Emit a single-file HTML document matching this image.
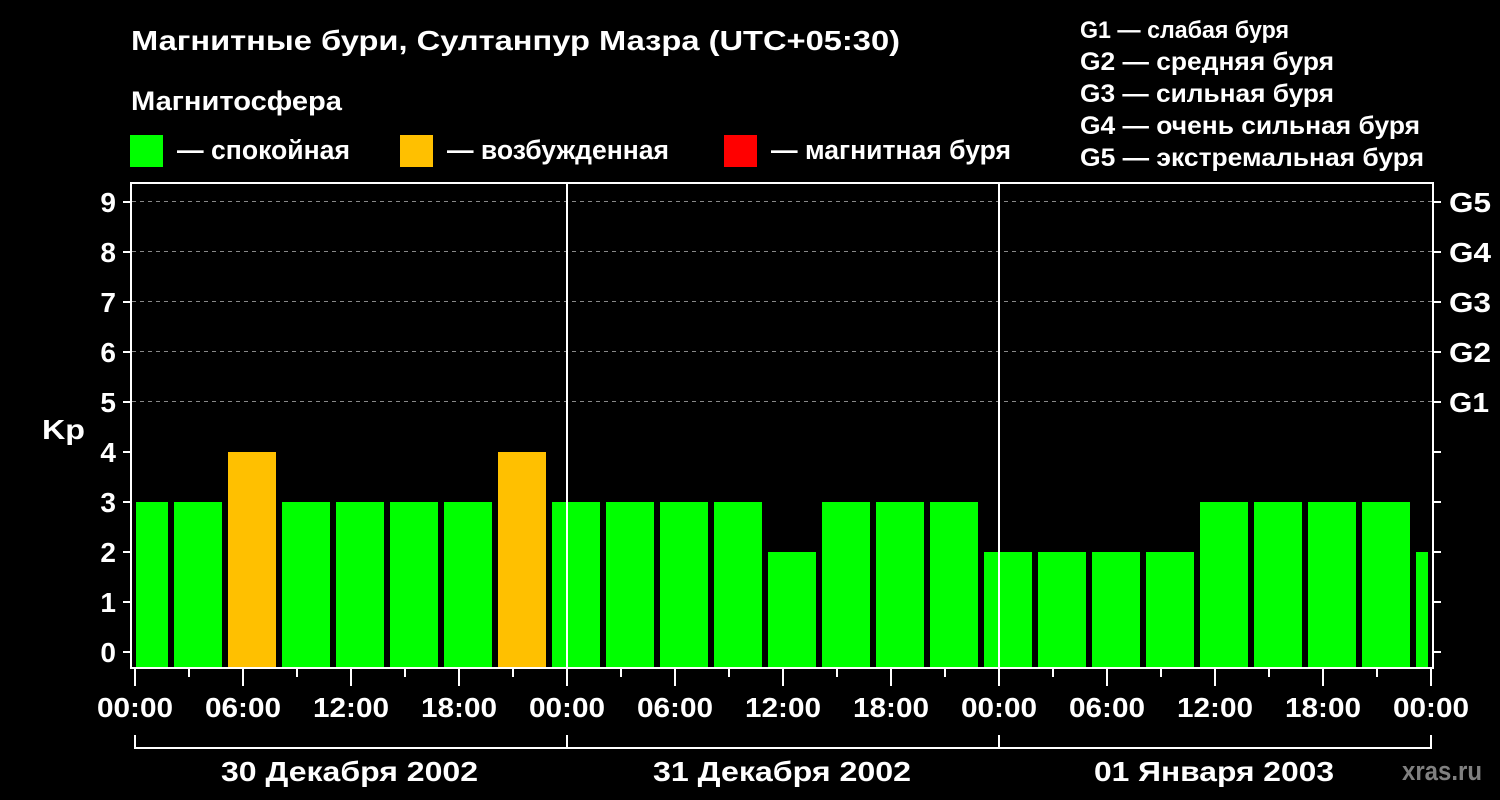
<!DOCTYPE html>
<html><head><meta charset="utf-8"><style>
html,body{margin:0;padding:0;background:#000;}
svg{display:block}
text{font-family:"Liberation Sans",sans-serif;font-weight:bold;fill:#fff}
</style></head><body>
<svg width="1500" height="800" xmlns="http://www.w3.org/2000/svg">
<rect width="1500" height="800" fill="#000"/>
<text x="131" y="50" font-size="28" textLength="769" lengthAdjust="spacingAndGlyphs">Магнитные бури, Султанпур Мазра (UTC+05:30)</text>
<text x="131" y="110" font-size="27" textLength="211" lengthAdjust="spacingAndGlyphs">Магнитосфера</text>
<rect x="130" y="135" width="33" height="32" fill="#00ff00"/>
<text x="177" y="159" font-size="27" textLength="173" lengthAdjust="spacingAndGlyphs">— спокойная</text>
<rect x="400" y="135" width="33" height="32" fill="#ffc000"/>
<text x="447" y="159" font-size="27" textLength="222" lengthAdjust="spacingAndGlyphs">— возбужденная</text>
<rect x="724" y="135" width="33" height="32" fill="#ff0000"/>
<text x="771" y="159" font-size="27" textLength="240" lengthAdjust="spacingAndGlyphs">— магнитная буря</text>
<g font-size="25">
<text x="1080" y="38" font-size="24" textLength="209" lengthAdjust="spacingAndGlyphs">G1 — слабая буря</text>
<text x="1080" y="70" textLength="254" lengthAdjust="spacingAndGlyphs">G2 — средняя буря</text>
<text x="1080" y="102" textLength="254" lengthAdjust="spacingAndGlyphs">G3 — сильная буря</text>
<text x="1080" y="134" textLength="340" lengthAdjust="spacingAndGlyphs">G4 — очень сильная буря</text>
<text x="1080" y="166" textLength="344" lengthAdjust="spacingAndGlyphs">G5 — экстремальная буря</text>
</g>
<g stroke="#888" stroke-width="1" stroke-dasharray="4,4">
<line x1="132" y1="201.5" x2="1432" y2="201.5"/>
<line x1="132" y1="251.5" x2="1432" y2="251.5"/>
<line x1="132" y1="301.5" x2="1432" y2="301.5"/>
<line x1="132" y1="351.5" x2="1432" y2="351.5"/>
<line x1="132" y1="401.5" x2="1432" y2="401.5"/>
</g>
<g fill="#00ff00">
<rect x="136" y="502" width="32" height="166"/>
<rect x="174" y="502" width="48" height="166"/>
<rect x="228" y="452" width="48" height="216" fill="#ffc000"/>
<rect x="282" y="502" width="48" height="166"/>
<rect x="336" y="502" width="48" height="166"/>
<rect x="390" y="502" width="48" height="166"/>
<rect x="444" y="502" width="48" height="166"/>
<rect x="498" y="452" width="48" height="216" fill="#ffc000"/>
<rect x="552" y="502" width="48" height="166"/>
<rect x="606" y="502" width="48" height="166"/>
<rect x="660" y="502" width="48" height="166"/>
<rect x="714" y="502" width="48" height="166"/>
<rect x="768" y="552" width="48" height="116"/>
<rect x="822" y="502" width="48" height="166"/>
<rect x="876" y="502" width="48" height="166"/>
<rect x="930" y="502" width="48" height="166"/>
<rect x="984" y="552" width="48" height="116"/>
<rect x="1038" y="552" width="48" height="116"/>
<rect x="1092" y="552" width="48" height="116"/>
<rect x="1146" y="552" width="48" height="116"/>
<rect x="1200" y="502" width="48" height="166"/>
<rect x="1254" y="502" width="48" height="166"/>
<rect x="1308" y="502" width="48" height="166"/>
<rect x="1362" y="502" width="48" height="166"/>
<rect x="1416" y="552" width="12" height="116"/>
</g>
<g stroke="#fff" stroke-width="2" fill="none">
<rect x="131" y="183" width="1302" height="485"/>
<line x1="567" y1="183" x2="567" y2="668"/>
<line x1="999" y1="183" x2="999" y2="668"/>
<path d="M135 735V748H1431V735M567 735V748M999 735V748"/>
<path d="M123 652h8M123 602h8M123 552h8M123 502h8M123 452h8M123 402h8M123 352h8M123 302h8M123 252h8M123 202h8"/>
<path d="M1433 652h8M1433 602h8M1433 552h8M1433 502h8M1433 452h8M1433 402h8M1433 352h8M1433 302h8M1433 252h8M1433 202h8"/>
<path d="M135 668v18M189 668v9M243 668v18M297 668v9M351 668v18M405 668v9M459 668v18M513 668v9M567 668v18M621 668v9M675 668v18M729 668v9M783 668v18M837 668v9M891 668v18M945 668v9M999 668v18M1053 668v9M1107 668v18M1161 668v9M1215 668v18M1269 668v9M1323 668v18M1377 668v9M1431 668v18"/>
</g>
<g font-size="28" text-anchor="end">
<text x="116" y="662">0</text><text x="116" y="612">1</text><text x="116" y="562">2</text>
<text x="116" y="512">3</text><text x="116" y="462">4</text><text x="116" y="412">5</text>
<text x="116" y="362">6</text><text x="116" y="312">7</text><text x="116" y="262">8</text>
<text x="116" y="212">9</text>
</g>
<text x="42" y="439" font-size="28" textLength="43" lengthAdjust="spacingAndGlyphs">Kp</text>
<g font-size="28">
<text x="1449" y="412" textLength="40" lengthAdjust="spacingAndGlyphs">G1</text><text x="1449" y="362" textLength="42" lengthAdjust="spacingAndGlyphs">G2</text><text x="1449" y="312" textLength="42" lengthAdjust="spacingAndGlyphs">G3</text>
<text x="1449" y="262" textLength="42" lengthAdjust="spacingAndGlyphs">G4</text><text x="1449" y="212" textLength="42" lengthAdjust="spacingAndGlyphs">G5</text>
</g>
<g font-size="28">
<text x="97" y="717" textLength="76" lengthAdjust="spacingAndGlyphs">00:00</text><text x="205" y="717" textLength="76" lengthAdjust="spacingAndGlyphs">06:00</text><text x="313" y="717" textLength="76" lengthAdjust="spacingAndGlyphs">12:00</text><text x="421" y="717" textLength="76" lengthAdjust="spacingAndGlyphs">18:00</text>
<text x="529" y="717" textLength="76" lengthAdjust="spacingAndGlyphs">00:00</text><text x="637" y="717" textLength="76" lengthAdjust="spacingAndGlyphs">06:00</text><text x="745" y="717" textLength="76" lengthAdjust="spacingAndGlyphs">12:00</text><text x="853" y="717" textLength="76" lengthAdjust="spacingAndGlyphs">18:00</text>
<text x="961" y="717" textLength="76" lengthAdjust="spacingAndGlyphs">00:00</text><text x="1069" y="717" textLength="76" lengthAdjust="spacingAndGlyphs">06:00</text><text x="1177" y="717" textLength="76" lengthAdjust="spacingAndGlyphs">12:00</text><text x="1285" y="717" textLength="76" lengthAdjust="spacingAndGlyphs">18:00</text>
<text x="1393" y="717" textLength="76" lengthAdjust="spacingAndGlyphs">00:00</text>
</g>
<g font-size="28">
<text x="221" y="781" textLength="257" lengthAdjust="spacingAndGlyphs">30 Декабря 2002</text>
<text x="653" y="781" textLength="258" lengthAdjust="spacingAndGlyphs">31 Декабря 2002</text>
<text x="1094" y="781" textLength="240" lengthAdjust="spacingAndGlyphs">01 Января 2003</text>
</g>
<text x="1402" y="780" font-size="27" textLength="80" lengthAdjust="spacingAndGlyphs" style="fill:#808080">xras.ru</text>
</svg>
</body></html>
